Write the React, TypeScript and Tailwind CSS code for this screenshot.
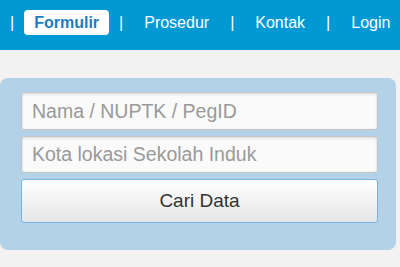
import { useState } from 'react'

const navItems = ['Formulir', 'Prosedur', 'Kontak', 'Login']

export default function App() {
  const [nama, setNama] = useState('')
  const [kota, setKota] = useState('')

  return (
    <div className="min-h-[267px] bg-[#f2f2f2] font-['Liberation_Sans',Arial,sans-serif]">
      {/* Header nav */}
      <header className="h-[50px] bg-[#0099d4] flex items-start pt-[10px] pl-[10px] gap-[10px] overflow-hidden">
        {navItems.map((item, i) => (
          <div key={item} className="flex items-start gap-[10px]">
            <span className="h-[25px] leading-[25px] text-[16px] text-white">|</span>
            <a
              href="#"
              className={
                i === 0
                  ? 'h-[25px] leading-[25px] px-[10px] rounded-[4px] bg-white text-[16px] font-bold text-[#1b7dc0]'
                  : 'h-[25px] leading-[25px] px-[11px] text-[16px] text-white whitespace-nowrap'
              }
            >
              {item}
            </a>
          </div>
        ))}
      </header>

      {/* Search panel */}
      <main className="pt-[28px]">
        <div className="w-[396px] rounded-[8px] bg-[#b4d2e7] pt-[14px] pb-[27px] pl-[21px] pr-[18px] flex flex-col gap-[6px]">
          <input
            autoFocus
            value={nama}
            onChange={(e) => setNama(e.target.value)}
            placeholder="Nama / NUPTK / PegID"
            className="h-[38px] w-full rounded-[3px] border border-[#c4c4c4] bg-[#fafafa] px-[10px] text-[19.5px] text-[#333] placeholder:text-[#999] shadow-[inset_0_1px_3px_rgba(0,0,0,0.15)] outline-none caret-[#222]"
          />
          <input
            value={kota}
            onChange={(e) => setKota(e.target.value)}
            placeholder="Kota lokasi Sekolah Induk"
            className="h-[37px] w-full rounded-[3px] border border-[#c4c4c4] bg-[#fafafa] px-[10px] text-[19.5px] text-[#333] placeholder:text-[#999] shadow-[inset_0_1px_3px_rgba(0,0,0,0.15)] outline-none"
          />
          <button className="h-[44px] w-full rounded-[3px] border border-[#72b5e3] bg-gradient-to-b from-[#ffffff] to-[#e6e6e6] text-[19px] text-[#333]">
            Cari Data
          </button>
        </div>
      </main>
    </div>
  )
}
